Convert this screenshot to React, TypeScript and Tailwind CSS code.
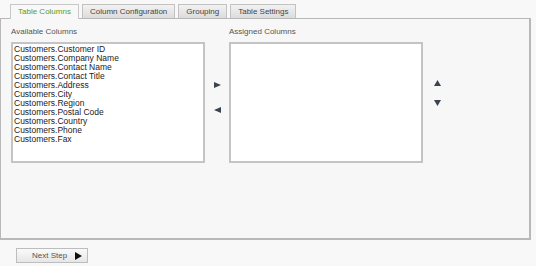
const available = [
  'Customers.Customer ID',
  'Customers.Company Name',
  'Customers.Contact Name',
  'Customers.Contact Title',
  'Customers.Address',
  'Customers.City',
  'Customers.Region',
  'Customers.Postal Code',
  'Customers.Country',
  'Customers.Phone',
  'Customers.Fax',
]

const tabs = ['Table Columns', 'Column Configuration', 'Grouping', 'Table Settings']

function Tri({ dir }: { dir: 'left' | 'right' | 'up' | 'down' }) {
  const pts = {
    right: '1,1 8,4 1,7',
    left: '8,1 1,4 8,7',
    up: '1,7 4.5,1 8,7',
    down: '1,1 4.5,7 8,1',
  }[dir]
  return (
    <svg width="9" height="8" viewBox="0 0 9 8">
      <polygon points={pts} fill="#3a4350" />
    </svg>
  )
}

export default function App() {
  return (
    <div
      className="w-[536px] h-[266px] bg-[#f8f8f8] overflow-hidden text-[#333]"
      style={{ fontFamily: '"Liberation Sans", Arial, sans-serif' }}
    >
      {/* tabs */}
      <div className="flex items-end gap-[3px] pl-[10px] pt-[3px] h-[18px]">
        {tabs.map((t, i) => (
          <div
            key={t}
            className={
              i === 0
                ? 'h-[15px] px-[7px] flex items-center text-[8px] text-[#5a9a22] bg-[#f8f8f8] border border-b-0 border-[#c8c8c8] relative top-[1px]'
                : 'h-[14px] px-[7px] flex items-center text-[8px] text-[#444] bg-gradient-to-b from-[#f2f2f2] to-[#dcdcdc] border border-b-0 border-[#c2c2c2]'
            }
          >
            {t}
          </div>
        ))}
      </div>

      {/* panel */}
      <div className="w-[531px] h-[222px] border border-[#b8b8b8] border-r-[2px] border-b-[2px] bg-[#f7f7f7] pl-[10px] pt-[9px]">
        <div className="flex">
          <div className="w-[194px]">
            <div className="text-[8px] text-[#555] h-[14px] leading-[8px]">Available Columns</div>
            <div className="h-[121px] bg-white border-2 border-[#c4c4c4] pl-[1px] pt-[1px]">
              {available.map((a) => (
                <div key={a} className="text-[8.5px] leading-[9px] text-[#222]">
                  {a}
                </div>
              ))}
            </div>
          </div>

          <div className="w-[24px] flex flex-col items-center pt-[53px] gap-[17px]">
            <Tri dir="right" />
            <Tri dir="left" />
          </div>

          <div className="w-[194px]">
            <div className="text-[8px] text-[#555] h-[14px] leading-[8px]">Assigned Columns</div>
            <div className="h-[121px] bg-white border-2 border-[#c4c4c4]" />
          </div>

          <div className="w-[28px] flex flex-col items-center pt-[51px] gap-[12px]">
            <Tri dir="up" />
            <Tri dir="down" />
          </div>
        </div>
      </div>

      {/* footer */}
      <div className="pl-[16px] pt-[8px]">
        <button className="w-[72px] h-[15px] flex items-center justify-between pl-[15px] pr-[5px] border border-[#bdbdbd] bg-gradient-to-b from-[#fafafa] to-[#e6e6e6] text-[8px] text-[#555]">
          <span>Next Step</span>
          <svg width="7" height="8" viewBox="0 0 7 8">
            <polygon points="0,0 7,4 0,8" fill="#111" />
          </svg>
        </button>
      </div>
    </div>
  )
}
